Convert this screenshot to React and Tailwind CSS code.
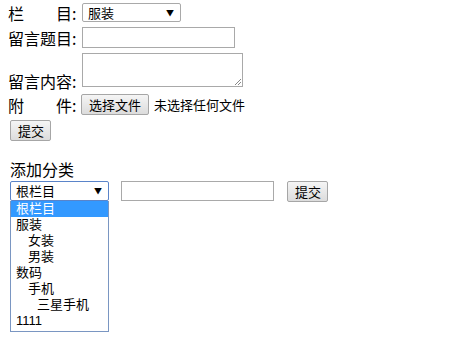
import React from "react";

const font = { fontFamily: '"Noto Sans CJK SC", "Liberation Sans", sans-serif' };
const listFont = { fontFamily: '"Liberation Sans", "Noto Sans CJK SC", sans-serif' };

function Button({ children, className = "" }) {
  return (
    <button
      className={`h-[21px] px-[7px] text-[13px] leading-none whitespace-nowrap text-black border border-[#a6a6a6] rounded-[2px] bg-gradient-to-b from-[#f5f5f5] to-[#dcdcdc] ${className}`}
    >
      {children}
    </button>
  );
}

function Label({ children }) {
  return <span className="w-[74px] shrink-0 text-[16px] leading-[20px] whitespace-pre">{children}</span>;
}

const options = [
  { label: "根栏目", indent: 0, active: true },
  { label: "服装", indent: 0 },
  { label: "女装", indent: 12 },
  { label: "男装", indent: 12 },
  { label: "数码", indent: 0 },
  { label: "手机", indent: 12 },
  { label: "三星手机", indent: 21 },
  { label: "1111", indent: 0 },
];

export default function App() {
  return (
    <div className="w-[466px] h-[338px] bg-white text-black overflow-hidden" style={font}>
      <div className="pl-[8px] pt-[3px] flex flex-col">
        <div className="flex items-center h-[19px]">
          <Label>{"栏　　目:"}</Label>
          <div className="w-[99px] h-[19px] border border-[#a9a9a9] rounded-[2px] flex items-center justify-between pl-[5px] pr-[6px] text-[13px]">
            <span>服装</span>
            <span className="text-[8px]">▼</span>
          </div>
        </div>

        <div className="flex items-center h-[21px] mt-[5px]">
          <Label>留言题目:</Label>
          <div className="w-[153px] h-[21px] border border-[#a9a9a9]" />
        </div>

        <div className="flex items-end h-[34px] mt-[5px]">
          <span className="w-[74px] shrink-0 text-[16px] leading-[20px] -mb-[4px]">留言内容:</span>
          <div className="relative w-[161px] h-[34px] border border-[#a9a9a9]">
            <svg className="absolute right-[1px] bottom-[1px]" width="7" height="7" viewBox="0 0 7 7">
              <path d="M1 7 L7 1 M4 7 L7 4" stroke="#888" strokeWidth="1" />
            </svg>
          </div>
        </div>

        <div className="flex items-center h-[21px] mt-[7px]">
          <span className="w-[73px] shrink-0 text-[16px] leading-[20px] whitespace-pre">{"附　　件:"}</span>
          <Button>选择文件</Button>
          <span className="ml-[5px] text-[13px]">未选择任何文件</span>
        </div>

        <div className="mt-[5px] pl-[2px] flex">
          <Button className="w-[41px] px-0">提交</Button>
        </div>

        <div className="mt-[18px] pl-[2px] text-[16px] leading-[20px]">添加分类</div>

        <div className="flex items-center h-[20px] mt-[2px] pl-[2px]">
          <div className="relative">
            <div className="w-[99px] h-[20px] border border-[#5a84c9] rounded-[2px] flex items-center justify-between pl-[5px] pr-[6px] text-[13px]">
              <span>根栏目</span>
              <span className="text-[8px]">▼</span>
            </div>
            <div
              className="absolute left-0 top-[20px] w-[99px] h-[131px] border border-[#7a96c2] border-t-0 bg-white text-[13px] z-10"
              style={listFont}
            >
              {options.map((o) => (
                <div
                  key={o.label}
                  className={`h-[16px] leading-[16px] pl-[5px] ${o.active ? "bg-[#3399ff] text-white" : ""}`}
                >
                  <span style={{ paddingLeft: o.indent }}>{o.label}</span>
                </div>
              ))}
            </div>
          </div>
          <div className="ml-[12px] w-[153px] h-[20px] border border-[#a9a9a9]" />
          <Button className="ml-[13px] h-[20px] w-[41px] px-0">提交</Button>
        </div>
      </div>
    </div>
  );
}
